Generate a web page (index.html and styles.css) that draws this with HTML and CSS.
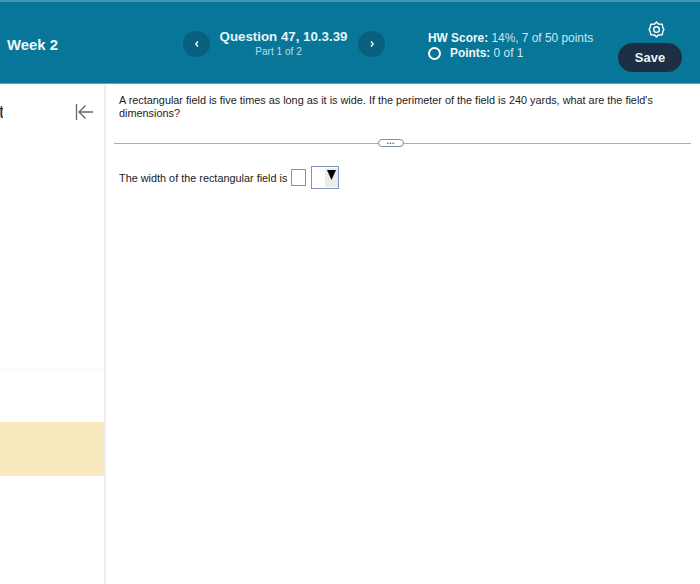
FILE: index.html
```html
<!DOCTYPE html>
<html lang="en">
<head>
<meta charset="utf-8">
<title>Question 47</title>
<link rel="stylesheet" href="styles.css">
</head>
<body>
<header class="topbar">
  <div class="week">Week 2</div>
  <nav class="qnav">
    <button class="round"><svg width="8" height="8" viewBox="0 0 8 8"><path d="M5 1.500 2.800 4 5 6.500" fill="none" stroke="#fff" stroke-width="1.400"/></svg></button>
    <div class="qtitle">
      <div class="qname">Question 47, 10.3.39</div>
      <div class="qpart">Part 1 of 2</div>
    </div>
    <button class="round"><svg width="8" height="8" viewBox="0 0 8 8"><path d="M3 1.500 5.200 4 3 6.500" fill="none" stroke="#fff" stroke-width="1.400"/></svg></button>
  </nav>
  <div class="score">
    <div><b>HW Score:</b> 14%, 7 of 50 points</div>
    <div class="points"><span class="ring"></span><span><b>Points:</b> 0 of 1</span></div>
  </div>
  <div class="actions">
    <svg class="gear" width="17" height="17" viewBox="0 0 24 24" fill="none" stroke="#fff" stroke-width="2" stroke-linejoin="round"><path d="M12 1.500 14.500 4.200 20 4.700 21 9.500 22.500 12 21 14.500 20 19.300 14.500 19.800 12 22.500 9.500 19.800 4 19.300 3 14.500 1.500 12 3 9.500 4 4.700 9.500 4.200z"/><circle cx="12" cy="12" r="4"/></svg>
    <button class="save">Save</button>
  </div>
</header>
<div class="layout">
  <aside class="sidebar">
    <div class="side-head">
      <span class="cut">t</span>
      <svg class="collapse" width="20" height="20" viewBox="0 0 20 20" fill="none" stroke="#666" stroke-width="1.300"><path d="M2.500 2v16M19 10H5M11.500 3.500 5 10l6.500 6.500"/></svg>
    </div>
    <div class="side-line"></div>
    <div class="side-hl"></div>
  </aside>
  <main class="content">
    <p class="question">A rectangular field is five times as long as it is wide. If the perimeter of the field is 240 yards, what are the field's dimensions?</p>
    <div class="divider"><span class="dots">•••</span></div>
    <div class="answer">
      <span>The width of the rectangular field is</span>
      <span class="input"></span>
      <span class="select"><span class="arrow"><svg width="9" height="10" viewBox="0 0 9 10"><path d="M0 0h9L4.500 10z" fill="#000"/></svg></span></span>
    </div>
  </main>
</div>
</body>
</html>
```
FILE: styles.css
```css
* { box-sizing: border-box; }
html, body { margin: 0; height: 584px; overflow: hidden; background: #fff; }
body { font-family: "Liberation Sans", Arial, sans-serif; color: #222; display: flex; flex-direction: column; }
.topbar {
  height: 84px; flex: none; background: #077699; border-top: 2px solid #3f9bb5; border-bottom: 1px solid #5aa9c0;
  display: flex; align-items: center; color: #fff; position: relative;
}
.week { width: 183px; padding-left: 7px; padding-top: 5px; font-size: 14.900px; font-weight: bold; color: #eef8fb; }
.qnav { display: flex; align-items: center; width: 202px; padding-top: 3px; }
.round { width: 27px; height: 26px; border-radius: 50%; border: 0; background: #0a5f7f; padding: 0; display: flex; align-items: center; justify-content: center; flex: none; }
.qtitle { flex: 1; text-align: center; padding-bottom: 2px; }
.qname { font-size: 13.300px; font-weight: bold; color: #e6f4f8; line-height: 17px; padding-right: 1px; }
.qpart { font-size: 10.100px; color: #b9dde8; line-height: 13px; padding-right: 11px; margin-top: 0; }
.score { margin-left: 43px; font-size: 11.900px; color: #d0e7ee; line-height: 15px; width: 190px; padding-top: 7px; }
.score b { color: #eef8fb; }
.points { display: flex; align-items: center; gap: 9px; }
.ring { width: 13px; height: 13px; border: 2px solid #fff; border-radius: 50%; flex: none; }
.actions { display: flex; flex-direction: column; align-items: center; width: 64px; padding-top: 8px; gap: 5px; }
.gear { display: block; margin-left: 12px; }
.save { width: 64px; height: 29px; border-radius: 15px; border: 0; background: #1d2f45; color: #eef4f7; font: bold 13px "Liberation Sans", Arial, sans-serif; padding: 0; }
.layout { flex: 1; display: flex; min-height: 0; }
.sidebar { width: 106px; flex: none; border-right: 2px solid #eeeeee; display: flex; flex-direction: column; }
.side-head { display: flex; justify-content: space-between; align-items: center; height: 55px; padding-right: 10px; }
.cut { font-size: 19px; color: #333; width: 4px; overflow: hidden; margin-left: -1px; }
.collapse { display: block; }
.side-line { margin-top: 230px; height: 1px; background: #f7f7f7; }
.side-hl { margin-top: 52px; height: 54px; width: 104px; background: #f9e9be; }
.content { flex: 1; padding: 10px 9px 0 8px; min-width: 0; }
.question { margin: 0 0 0 5px; font-size: 10.870px; line-height: 13px; color: #222; width: 550px; }
.divider { margin-top: 23px; height: 1px; background: #a9aeb4; position: relative; display: flex; justify-content: center; }
.dots { position: absolute; top: -4px; left: 264px; width: 26px; height: 8px; border: 1px solid #7f8fa6; border-radius: 4px; background: #fff; font-size: 5px; line-height: 6px; text-align: center; letter-spacing: 1px; color: #445; }
.answer { margin: 22px 0 0 5px; display: flex; align-items: center; font-size: 10.870px; color: #222; }
.input { width: 15px; height: 17px; border: 1px solid #7f95c0; margin-left: 4px; background: #fff; }
.select { width: 28px; height: 23px; border: 1px solid #7f95c0; margin-left: 5px; display: flex; justify-content: flex-end; padding: 1px 0 0 0; background: #fff; }
.arrow { width: 13px; height: 19px; background: #ececec; display: flex; align-items: flex-start; justify-content: center; padding-top: 2px; }
.arrow svg { display: block; }
```
